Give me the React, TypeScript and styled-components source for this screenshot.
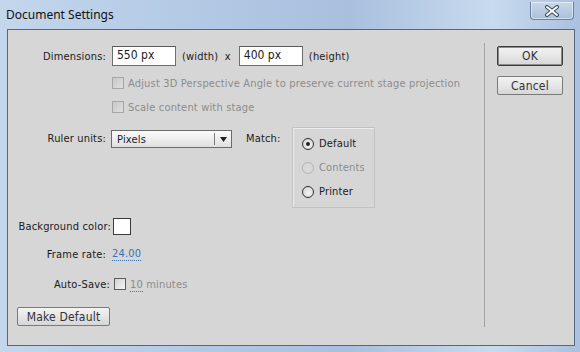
import styled, { createGlobalStyle } from "styled-components";

const GlobalStyle = createGlobalStyle`
  html, body {
    margin: 0;
    padding: 0;
    background: #c4d7ed;
  }
`;

const Window = styled.div`
  width: 580px;
  height: 352px;
  box-sizing: border-box;
  display: flex;
  flex-direction: column;
  background: linear-gradient(90deg, #c3d6ec 0%, #b4cbe6 30%, #a8c0de 60%, #c8daee 85%, #a9c1df 100%);
  font-family: "DejaVu Sans Condensed", "DejaVu Sans", sans-serif;
  font-size: 11px;
  letter-spacing: 0.17px;
  color: #1b1b1b;
  overflow: hidden;
`;

const TitleBar = styled.div`
  height: 29px;
  display: flex;
  align-items: flex-start;
  justify-content: space-between;
  padding: 0 6px 0 6px;
`;

const Title = styled.div`
  font-family: "Noto Sans", "Open Sans", sans-serif;
  font-size: 12px;
  letter-spacing: 0;
  color: #111;
  margin-top: 6px;
`;

const CloseButton = styled.div`
  width: 44px;
  height: 18px;
  margin-top: 2px;
  box-sizing: border-box;
  border: 1px solid #6f819c;
  border-top: none;
  border-radius: 0 0 4px 4px;
  background: linear-gradient(180deg, #c9d8ea 0%, #b9cbe2 50%, #aac0dc 100%);
  box-shadow: inset 0 0 0 1px rgba(255, 255, 255, 0.45);
  display: flex;
  align-items: center;
  justify-content: center;
`;

const Panel = styled.div`
  flex: 1;
  margin: 0 5px 6px 7px;
  border: 1px solid #59677a;
  background: #d6d6d6;
  display: flex;
`;

const MainColumn = styled.div`
  width: 476px;
  display: flex;
  flex-direction: column;
  padding-top: 16px;
  box-sizing: border-box;
`;

const Separator = styled.div`
  width: 1px;
  background: #a3a3a3;
  margin: 13px 0 18px 0;
`;

const ButtonColumn = styled.div`
  display: flex;
  flex-direction: column;
  gap: 10px;
  padding: 16px 0 0 12px;
`;

const Row = styled.div<{ $top?: number; $height?: number }>`
  display: flex;
  align-items: center;
  margin-top: ${({ $top }) => $top ?? 0}px;
  height: ${({ $height }) => $height ?? 16}px;
`;

const TopRow = styled.div<{ $top?: number }>`
  display: flex;
  align-items: flex-start;
  margin-top: ${({ $top }) => $top ?? 0}px;
  height: 80px;
`;

const Label = styled.div<{ $width?: number }>`
  width: ${({ $width }) => $width ?? 98}px;
  text-align: right;
  white-space: nowrap;
  flex-shrink: 0;
`;

const RulerLabel = styled(Label)`
  margin: 5px 5px 0 0;
`;

const Text = styled.span<{ $muted?: boolean }>`
  color: ${({ $muted }) => ($muted ? "#8c8c8c" : "#1b1b1b")};
  white-space: nowrap;
`;

const Input = styled.div`
  width: 64px;
  height: 20px;
  box-sizing: border-box;
  border: 1px solid #6e6e6e;
  border-top-color: #5a5a5a;
  background: #fff;
  padding: 0 0 0 4px;
  line-height: 17px;
  font-size: 12px;
  letter-spacing: 0;
  margin-right: 6px;
`;

const Check = styled.div<{ $disabled?: boolean }>`
  width: 12px;
  height: 12px;
  box-sizing: border-box;
  border: 1px solid ${({ $disabled }) => ($disabled ? "#a6a6a6" : "#5c5c5c")};
  background: ${({ $disabled }) =>
    $disabled
      ? "linear-gradient(135deg, #c9c9c9, #dedede)"
      : "linear-gradient(135deg, #d2d2d2, #f4f4f4)"};
  margin-right: 4px;
  flex-shrink: 0;
`;

const Select = styled.div`
  width: 121px;
  height: 18px;
  box-sizing: border-box;
  margin-top: 3px;
  border: 1px solid #6b6b6b;
  background: linear-gradient(180deg, #fbfbfb 0%, #ececec 55%, #e0e0e0 100%);
  display: flex;
  align-items: center;
  padding-left: 5px;
`;

const SelectValue = styled.div`
  flex: 1;
`;

const SelectArrow = styled.div`
  width: 16px;
  height: 12px;
  border-left: 1px solid #7c7c7c;
  display: flex;
  align-items: center;
  justify-content: center;
`;

const MatchLabel = styled.div`
  margin: 5px 0 0 14px;
  width: 46px;
`;

const MatchBox = styled.div`
  width: 83px;
  height: 81px;
  box-sizing: border-box;
  border: 1px solid #c2c2c2;
  box-shadow: inset 1px 1px 0 #ececec;
  display: flex;
  flex-direction: column;
  padding: 9px 0 0 9px;
  gap: 11px;
`;

const RadioRow = styled.div<{ $disabled?: boolean }>`
  display: flex;
  align-items: center;
  height: 13px;
  gap: 5px;
  color: ${({ $disabled }) => ($disabled ? "#8c8c8c" : "#1b1b1b")};
`;

const Radio = styled.div<{ $disabled?: boolean; $checked?: boolean }>`
  width: 12px;
  height: 12px;
  box-sizing: border-box;
  border-radius: 50%;
  border: 1px solid ${({ $disabled }) => ($disabled ? "#b4b4b4" : "#2e2e2e")};
  background: ${({ $disabled }) =>
    $disabled ? "#d8d8d8" : "radial-gradient(circle at 60% 60%, #f4f4f4, #cfcfcf)"};
  display: flex;
  align-items: center;
  justify-content: center;
  &::after {
    content: "";
    display: ${({ $checked }) => ($checked ? "block" : "none")};
    width: 4px;
    height: 4px;
    border-radius: 50%;
    background: #222;
  }
`;

const Swatch = styled.div`
  width: 18px;
  height: 17px;
  box-sizing: border-box;
  border: 1px solid #3c3c3c;
  background: #fff;
  margin-left: 2px;
`;

const LinkValue = styled.span<{ $muted?: boolean }>`
  color: ${({ $muted }) => ($muted ? "#8c8c8c" : "#3a72b0")};
  border-bottom: 1px dotted ${({ $muted }) => ($muted ? "#6e6e6e" : "#3a72b0")};
  line-height: 13px;
`;

const Button = styled.div<{ $default?: boolean; $width?: number }>`
  width: ${({ $width }) => $width ?? 66}px;
  height: ${({ $default }) => ($default ? 20 : 19)}px;
  box-sizing: border-box;
  border: 1px solid ${({ $default }) => ($default ? "#3d3d3d" : "#7a7a7a")};
  box-shadow: ${({ $default }) => ($default ? "inset 0 0 0 1px #8a8a8a" : "none")};
  border-radius: 2px;
  background: linear-gradient(180deg, #f3f3f3 0%, #e6e6e6 50%, #d6d6d6 100%);
  display: flex;
  align-items: center;
  justify-content: center;
  color: #333;
  font-size: 12px;
  letter-spacing: 0.2px;
`;

const MakeDefault = styled(Button)`
  margin: 15px 0 0 9px;
`;

const CloseGlyph = () => (
  <svg width="16" height="12" viewBox="0 0 16 12">
    <path d="M3 2 L13 10 M13 2 L3 10" stroke="#3b4a5e" strokeWidth="4" strokeLinecap="round" />
    <path d="M3 2 L13 10 M13 2 L3 10" stroke="#ffffff" strokeWidth="2" strokeLinecap="round" />
  </svg>
);

const DownArrow = () => (
  <svg width="7" height="5" viewBox="0 0 7 5">
    <path d="M0 0 H7 L3.5 5 Z" fill="#222" />
  </svg>
);

export default function App() {
  return (
    <>
      <GlobalStyle />
      <Window>
        <TitleBar>
          <Title>Document Settings</Title>
          <CloseButton>
            <CloseGlyph />
          </CloseButton>
        </TitleBar>
        <Panel>
          <MainColumn>
            <Row $height={20}>
              <Label>Dimensions:</Label>
              <Label $width={6} />
              <Input>550 px</Input>
              <Text>(width)&nbsp;&nbsp;x</Text>
              <Label $width={8} />
              <Input>400 px</Input>
              <Text>(height)</Text>
            </Row>
            <Row $top={9}>
              <Label $width={104} />
              <Check $disabled />
              <Text $muted>Adjust 3D Perspective Angle to preserve current stage projection</Text>
            </Row>
            <Row $top={8}>
              <Label $width={104} />
              <Check $disabled />
              <Text $muted>Scale content with stage</Text>
            </Row>
            <TopRow $top={12}>
              <RulerLabel>Ruler units:</RulerLabel>
              <Select>
                <SelectValue>Pixels</SelectValue>
                <SelectArrow>
                  <DownArrow />
                </SelectArrow>
              </Select>
              <MatchLabel>Match:</MatchLabel>
              <MatchBox>
                <RadioRow>
                  <Radio $checked />
                  Default
                </RadioRow>
                <RadioRow $disabled>
                  <Radio $disabled />
                  Contents
                </RadioRow>
                <RadioRow>
                  <Radio />
                  Printer
                </RadioRow>
              </MatchBox>
            </TopRow>
            <Row $top={10} $height={18}>
              <Label $width={103}>Background color:</Label>
              <Swatch />
            </Row>
            <Row $top={11}>
              <Label>Frame rate:</Label>
              <Label $width={6} />
              <LinkValue>24.00</LinkValue>
            </Row>
            <Row $top={14}>
              <Label $width={102}>Auto-Save:</Label>
              <Label $width={4} />
              <Check />
              <Text $muted>
                <LinkValue $muted>10</LinkValue> minutes
              </Text>
            </Row>
            <MakeDefault $width={93}>Make Default</MakeDefault>
          </MainColumn>
          <Separator />
          <ButtonColumn>
            <Button $default>OK</Button>
            <Button>Cancel</Button>
          </ButtonColumn>
        </Panel>
      </Window>
    </>
  );
}
